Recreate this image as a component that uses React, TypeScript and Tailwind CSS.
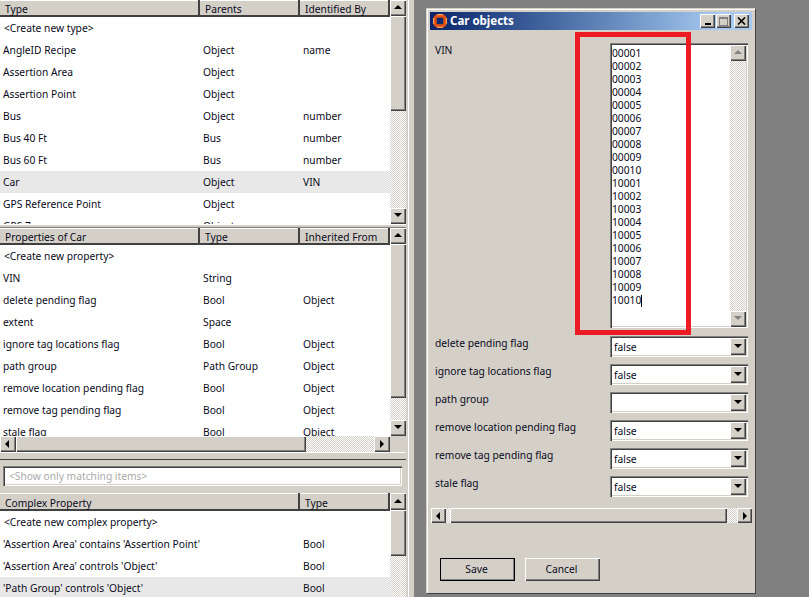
const raised = 'bg-[#d4d0c8] shadow-[inset_1px_1px_#ffffff,inset_-1px_-1px_#404040,inset_-2px_-2px_#808080]'
const sunken =
  'bg-white shadow-[inset_1px_1px_#808080,inset_2px_2px_#404040,inset_-1px_-1px_#ffffff,inset_-2px_-2px_#d4d0c8]'
const hatch = 'bg-[repeating-conic-gradient(#d4d0c8_0_25%,#ffffff_0_50%)] bg-[length:2px_2px]'

type Dir = 'up' | 'down' | 'left' | 'right'

const arrows: Record<Dir, string> = {
  up: '4,1 0,5 8,5',
  down: '0,1 8,1 4,5',
  left: '5,0 5,8 1,4',
  right: '2,0 2,8 6,4'
}

function Arrow({ dir, color = '#000000' }: { dir: Dir; color?: string }) {
  return (
    <svg width="8" height="8" viewBox="0 0 8 8" className="block">
      <polygon points={arrows[dir]} fill={color} />
    </svg>
  )
}

function ArrowButton({ dir, disabled, className = 'w-4 h-4' }: { dir: Dir; disabled?: boolean; className?: string }) {
  return (
    <div className={`${raised} ${className} flex shrink-0 items-center justify-center`}>
      <Arrow dir={dir} color={disabled ? '#808080' : '#000000'} />
    </div>
  )
}

function VScroll({ thumb }: { thumb: number }) {
  return (
    <div className="flex h-full w-4 shrink-0 flex-col">
      <ArrowButton dir="up" />
      <div className={`${raised} w-4 shrink-0`} style={{ height: thumb }} />
      <div className={`${hatch} flex-1`} />
      <ArrowButton dir="down" />
    </div>
  )
}

type TableProps = {
  columns: { title: string; width: number }[]
  rows: string[][]
  selected?: number
  height: number
  thumb: number
  hideDown?: boolean
}

function DataTable({ columns, rows, selected, height, thumb, hideDown }: TableProps) {
  return (
    <div className="flex w-full" style={{ height }}>
      <div className="flex min-w-0 flex-1 flex-col overflow-hidden bg-white">
        <div className={`flex shrink-0 bg-[#d4d0c8] ${hideDown ? 'h-[18px]' : 'h-[17px]'}`}>
          {columns.map((col) => (
            <div
              key={col.title}
              style={{ width: col.width }}
              className={`h-full shrink-0 border-r-2 border-b-2 border-[#404040] pl-[5px] leading-[14px] shadow-[inset_0_1px_#ffffff] ${hideDown ? 'pt-[3px]' : 'pt-[2px]'}`}
            >
              {col.title}
            </div>
          ))}
        </div>
        {rows.map((row, i) => (
          <div key={row[0]} className={`flex h-[22px] shrink-0 items-center pt-[1px] ${i === selected ? 'bg-[#e8e8e8]' : ''}`}>
            {columns.map((col, j) => (
              <div key={col.title} style={{ width: col.width }} className={`shrink-0 whitespace-nowrap ${i === 0 ? 'pl-[4px]' : 'pl-[3px]'}`}>
                {row[j]}
              </div>
            ))}
          </div>
        ))}
      </div>
      {hideDown ? (
        <div className="flex h-full w-4 shrink-0 flex-col">
          <ArrowButton dir="up" className="h-[17px] w-4" />
          <div className={`${raised} w-4 shrink-0`} style={{ height: thumb }} />
          <div className={`${hatch} flex-1`} />
        </div>
      ) : (
        <VScroll thumb={thumb} />
      )}
    </div>
  )
}

const typeRows = [
  ['<Create new type>', '', ''],
  ['AngleID Recipe', 'Object', 'name'],
  ['Assertion Area', 'Object', ''],
  ['Assertion Point', 'Object', ''],
  ['Bus', 'Object', 'number'],
  ['Bus 40 Ft', 'Bus', 'number'],
  ['Bus 60 Ft', 'Bus', 'number'],
  ['Car', 'Object', 'VIN'],
  ['GPS Reference Point', 'Object', ''],
  ['GPS 7', 'Object', '']
]

const propertyRows = [
  ['<Create new property>', '', ''],
  ['VIN', 'String', ''],
  ['delete pending flag', 'Bool', 'Object'],
  ['extent', 'Space', ''],
  ['ignore tag locations flag', 'Bool', 'Object'],
  ['path group', 'Path Group', 'Object'],
  ['remove location pending flag', 'Bool', 'Object'],
  ['remove tag pending flag', 'Bool', 'Object'],
  ['stale flag', 'Bool', 'Object']
]

const complexRows = [
  ['<Create new complex property>', ''],
  ["'Assertion Area' contains 'Assertion Point'", 'Bool'],
  ["'Assertion Area' controls 'Object'", 'Bool'],
  ["'Path Group' controls 'Object'", 'Bool']
]

const vins = ['00001', '00002', '00003', '00004', '00005', '00006', '00007', '00008', '00009', '00010', '10001', '10002', '10003', '10004', '10005', '10006', '10007', '10008', '10009']

const selects = [
  { label: 'delete pending flag', value: 'false' },
  { label: 'ignore tag locations flag', value: 'false' },
  { label: 'path group', value: '' },
  { label: 'remove location pending flag', value: 'false' },
  { label: 'remove tag pending flag', value: 'false' },
  { label: 'stale flag', value: 'false' }
]

function TitleButton({ children }: { children: React.ReactNode }) {
  return <div className={`${raised} flex h-[14px] w-[15px] items-center justify-center`}>{children}</div>
}

function LifeRing() {
  return (
    <svg width="16" height="16" viewBox="0 0 16 16" className="shrink-0">
      <rect x="3" y="3" width="10" height="10" rx="3" fill="none" stroke="#e2500f" strokeWidth="3.4" />
      <path d="M5 1.6h6M5 14.4h6M1.6 5v6M14.4 5v6" stroke="#f7a15c" strokeWidth="1.2" />
    </svg>
  )
}

function CarDialog() {
  return (
    <div className="relative flex h-[586px] w-[330px] flex-col border border-[#d4d0c8] border-r-[#404040] border-b-[#404040] bg-[#d4d0c8] p-[3px] shadow-[inset_1px_1px_#ffffff]">
      <div className="flex h-[18px] shrink-0 items-center bg-gradient-to-r from-[#0a246a] to-[#a6caf0] to-90% pl-[2px] pr-[3px]">
        <LifeRing />
        <span className="ml-[2px] flex-1 text-[11.5px] font-bold text-white">Car objects</span>
        <TitleButton>
          <div className="mt-[6px] h-[2px] w-[6px] bg-black" />
        </TitleButton>
        <div className="ml-[1px]">
          <TitleButton>
            <div className="h-[9px] w-[9px] border border-t-2 border-[#808080]" />
          </TitleButton>
        </div>
        <div className="ml-[3px]">
          <TitleButton>
            <svg width="9" height="8" viewBox="0 0 9 8">
              <path d="M1 0.5 8 7.5M8 0.5 1 7.5" stroke="#000000" strokeWidth="1.6" />
            </svg>
          </TitleButton>
        </div>
      </div>

      <div className="mt-[13px] flex pl-[5px]">
        <div className="w-[175px] shrink-0 leading-[14px]">VIN</div>
        <div className={`${sunken} flex h-[285px] w-[138px] p-[2px] pb-[1px]`}>
          <div className="flex-1 pt-[2px] leading-[13px]">
            {vins.map((v) => (
              <div key={v}>{v}</div>
            ))}
            <div className="flex items-center">
              10010
              <span className="h-[12px] w-px bg-black" />
            </div>
          </div>
          <div className="flex w-4 flex-col">
            <ArrowButton dir="up" disabled />
            <div className={`${hatch} flex-1`} />
            <ArrowButton dir="down" disabled />
          </div>
        </div>
      </div>

      <div className="mt-[8px] flex flex-col gap-[7px] pl-[5px]">
        {selects.map((s) => (
          <div key={s.label} className="flex h-[21px]">
            <div className="w-[175px] shrink-0 leading-[14px]">{s.label}</div>
            <div className={`${sunken} flex h-[21px] w-[138px] items-center justify-between pl-[4px] pr-[2px]`}>
              <span className="pt-[3px]">{s.value}</span>
              <ArrowButton dir="down" className="h-[17px] w-4" />
            </div>
          </div>
        ))}
      </div>

      <div className="ml-[1px] mt-[11px] flex h-[15px] w-[321px]">
        <ArrowButton dir="left" className="h-[15px] w-[15px]" />
        <div className={`${hatch} w-[4px]`} />
        <div className={`${raised} flex-1`} />
        <div className={`${hatch} w-[10px]`} />
        <ArrowButton dir="right" className="h-[15px] w-[15px]" />
      </div>

      <div className="mt-[35px] flex gap-[10px] pl-[10px]">
        <button className={`${raised} h-[23px] w-[75px] pr-[2px] outline outline-1 -outline-offset-1 outline-black`}>Save</button>
        <button className={`${raised} h-[23px] w-[75px] pr-[2px]`}>Cancel</button>
      </div>

      {/* red annotation drawn on top of the screenshot */}
      <div className="pointer-events-none absolute left-[148px] top-[23px] h-[303px] w-[116px] border-[5px] border-[#ed1c24]" />
    </div>
  )
}

export default function App() {
  return (
    <div className="flex h-[597px] w-[809px] overflow-hidden bg-[#808080] font-['Noto_Sans',Arial,sans-serif] text-[10.25px] text-[#0a0a20]">
      <div className="flex w-[406px] shrink-0 flex-col bg-[#d4d0c8]">
        <DataTable
          columns={[
            { title: 'Type', width: 200 },
            { title: 'Parents', width: 100 },
            { title: 'Identified By', width: 90 }
          ]}
          rows={typeRows}
          selected={7}
          height={224}
          thumb={95}
        />
        <div className="h-[4px] shrink-0 border-t border-b border-t-white border-b-[#808080]" />
        <DataTable
          columns={[
            { title: 'Properties of Car', width: 200 },
            { title: 'Type', width: 100 },
            { title: 'Inherited From', width: 90 }
          ]}
          rows={propertyRows}
          height={208}
          thumb={154}
        />
        <div className="flex h-[17px] shrink-0 border-b border-white">
          <ArrowButton dir="left" />
          <div className={`${raised} w-[290px]`} />
          <div className={`${hatch} w-[68px]`} />
          <ArrowButton dir="right" />
        </div>
        <div className="mt-[6px] h-px shrink-0 bg-[#404040]" />
        <div className="flex h-[33px] shrink-0 items-start px-[3px] pt-[6px]">
          <div className={`${sunken} h-[20px] w-[399px] pl-[6px] leading-[20px] text-[#aaaaaa]`}>
            {'<Show only matching items>'}
          </div>
        </div>
        <DataTable
          columns={[
            { title: 'Complex Property', width: 300 },
            { title: 'Type', width: 90 }
          ]}
          rows={complexRows}
          selected={3}
          height={104}
          thumb={46}
          hideDown
        />
      </div>
      <div className="h-full w-[8px] shrink-0 bg-[#d4d0c8] pl-[2px]">
        <div className="h-full w-px bg-white" />
      </div>
      <div className="pl-[12px] pt-[8px]">
        <CarDialog />
      </div>
    </div>
  )
}
